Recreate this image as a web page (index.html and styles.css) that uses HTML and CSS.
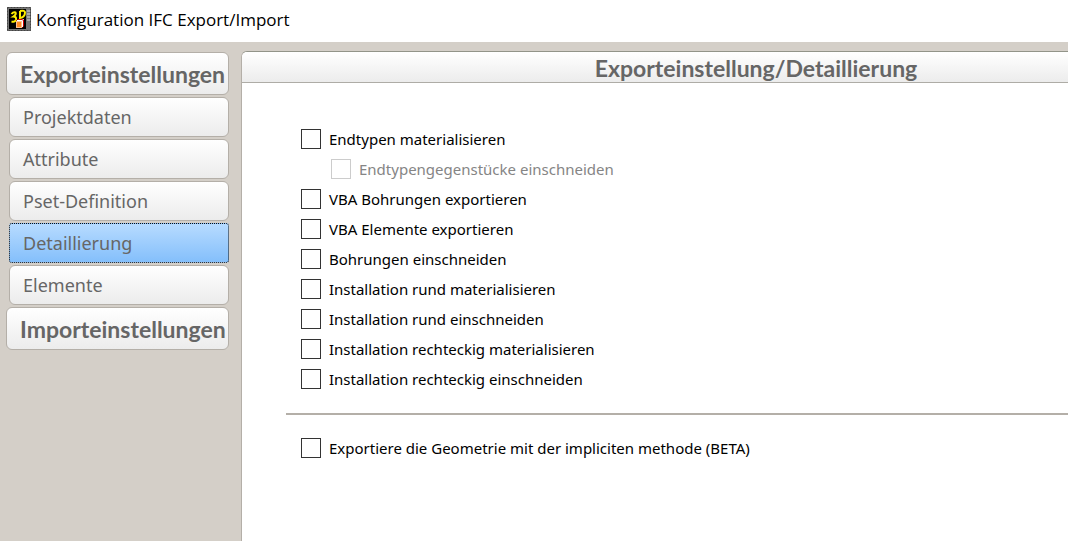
FILE: index.html
```html
<!DOCTYPE html>
<html lang="de">
<head>
<meta charset="utf-8">
<title>Konfiguration IFC Export/Import</title>
<link rel="stylesheet" href="styles.css">
</head>
<body>
<header class="titlebar">
  <svg class="app-icon" viewBox="0 0 24 24" aria-hidden="true">
    <rect width="24" height="24" fill="#777"/>
    <rect x="0.500" y="0.500" width="23" height="23" fill="none" stroke="#444" stroke-dasharray="2 1"/>
    <rect x="2" y="2" width="17" height="20" fill="#000"/>
    <path d="M20 4h3M20 7h3M20 10h3M20 13h3" stroke="#ddd"/>
    <path d="M4.500 7q2-2.500 4-1.500 1 2-2 4 3 0 2.500 3-1 3-4.500 2" fill="none" stroke="#ffee00" stroke-width="2"/>
    <path d="M13 4v7q5-1 5-5.500 0-2.500-5-1.500" fill="none" stroke="#ffee00" stroke-width="2"/>
    <path d="M9 14l2-2h6v7l-2 2z" fill="#d00000"/>
    <path d="M10 13.500h5.500l1-1.500M15.500 14v6" stroke="#fff" fill="none"/>
    <rect x="9.500" y="14.500" width="5" height="6" fill="#ff8a22" stroke="#ffc090"/>
  </svg>
  <h1 class="window-title">Konfiguration IFC Export/Import</h1>
</header>
<div class="workspace">
  <nav class="sidebar">
    <button class="nav-group" type="button">Exporteinstellungen</button>
    <button class="nav-item" type="button">Projektdaten</button>
    <button class="nav-item" type="button">Attribute</button>
    <button class="nav-item" type="button">Pset-Definition</button>
    <button class="nav-item nav-item-active" type="button" aria-current="page">Detaillierung</button>
    <button class="nav-item" type="button">Elemente</button>
    <button class="nav-group" type="button">Importeinstellungen</button>
  </nav>
  <main class="panel">
    <h2 class="panel-title">Exporteinstellung/Detaillierung</h2>
    <form class="options">
      <label class="option"><input class="box" type="checkbox">Endtypen materialisieren</label>
      <label class="option option-sub"><input class="box" type="checkbox" disabled>Endtypengegenstücke einschneiden</label>
      <label class="option"><input class="box" type="checkbox">VBA Bohrungen exportieren</label>
      <label class="option"><input class="box" type="checkbox">VBA Elemente exportieren</label>
      <label class="option"><input class="box" type="checkbox">Bohrungen einschneiden</label>
      <label class="option"><input class="box" type="checkbox">Installation rund materialisieren</label>
      <label class="option"><input class="box" type="checkbox">Installation rund einschneiden</label>
      <label class="option"><input class="box" type="checkbox">Installation rechteckig materialisieren</label>
      <label class="option"><input class="box" type="checkbox">Installation rechteckig einschneiden</label>
      <hr class="divider">
      <label class="option"><input class="box" type="checkbox">Exportiere die Geometrie mit der impliciten methode (BETA)</label>
    </form>
  </main>
</div>
</body>
</html>
```
FILE: styles.css
```css
* { box-sizing: border-box; }
body {
  margin: 0;
  min-height: 100vh;
  display: flex;
  flex-direction: column;
  background: #d4cfc8;
  font-family: "Noto Sans", sans-serif;
}
.titlebar {
  display: flex;
  align-items: center;
  gap: 5px;
  height: 42px;
  padding: 0 7px 4px;
  background: #fff;
}
.app-icon { width: 24px; height: 24px; }
.window-title {
  margin: 0;
  padding-top: 2px;
  font: 400 17px/24px "Open Sans", sans-serif;
  color: #000;
}
.workspace {
  flex: 1;
  display: flex;
  gap: 12px;
  padding: 9px 0 0 6px;
}
.sidebar {
  flex: none;
  width: 223px;
  padding-top: 1px;
  display: flex;
  flex-direction: column;
  gap: 2px;
}
.nav-group,
.nav-item {
  border: 1px solid #b4afa8;
  border-radius: 6px;
  background: linear-gradient(#fff, #ececec);
  color: #666;
  text-align: left;
  white-space: nowrap;
}
.nav-group {
  height: 43px;
  padding: 1px 0 0 13px;
  font: 700 23px/28px "Lato", sans-serif;
}
.nav-item {
  height: 40px;
  margin-left: 3px;
  padding: 0 13px;
  font: 400 18px/24px "Noto Sans", sans-serif;
}
.nav-item-active {
  border: 1px dotted #111;
  border-radius: 3px;
  background: linear-gradient(#b7dbff, #84bffb);
}
.panel {
  flex: 1;
  border: 1px solid #b4afa8;
  border-top-color: #929489;
  border-width: 1px 0 0 1px;
  border-radius: 6px 0 0 0;
  background: #fff;
}
.panel-title {
  margin: 0;
  padding: 1px 0 0 202px;
  border-bottom: 1px solid #aeaca6;
  border-radius: 5px 0 0 0;
  background: linear-gradient(#fff, #ececec);
  text-align: center;
  color: #666;
  font: 700 23px/30px "Lato", sans-serif;
  height: 31px;
}
.options {
  display: flex;
  flex-direction: column;
  padding: 41px 0 0 44px;
}
.option {
  display: flex;
  align-items: center;
  gap: 8px;
  height: 30px;
  margin-left: 15px;
  color: #000;
  font-size: 15px;
  line-height: 22px;
}
.option-sub { margin-left: 45px; color: #858585; }
.box {
  appearance: none;
  width: 20px;
  height: 20px;
  margin: 0;
  border: 1px solid #333;
  background: #fff;
}
.box:checked { background: #333; }
.box:disabled { border-color: #ccc; }
.divider {
  width: 100%;
  height: 2px;
  margin: 19px 0 18px;
  border: 0;
  background: #b4afa8;
}
```
